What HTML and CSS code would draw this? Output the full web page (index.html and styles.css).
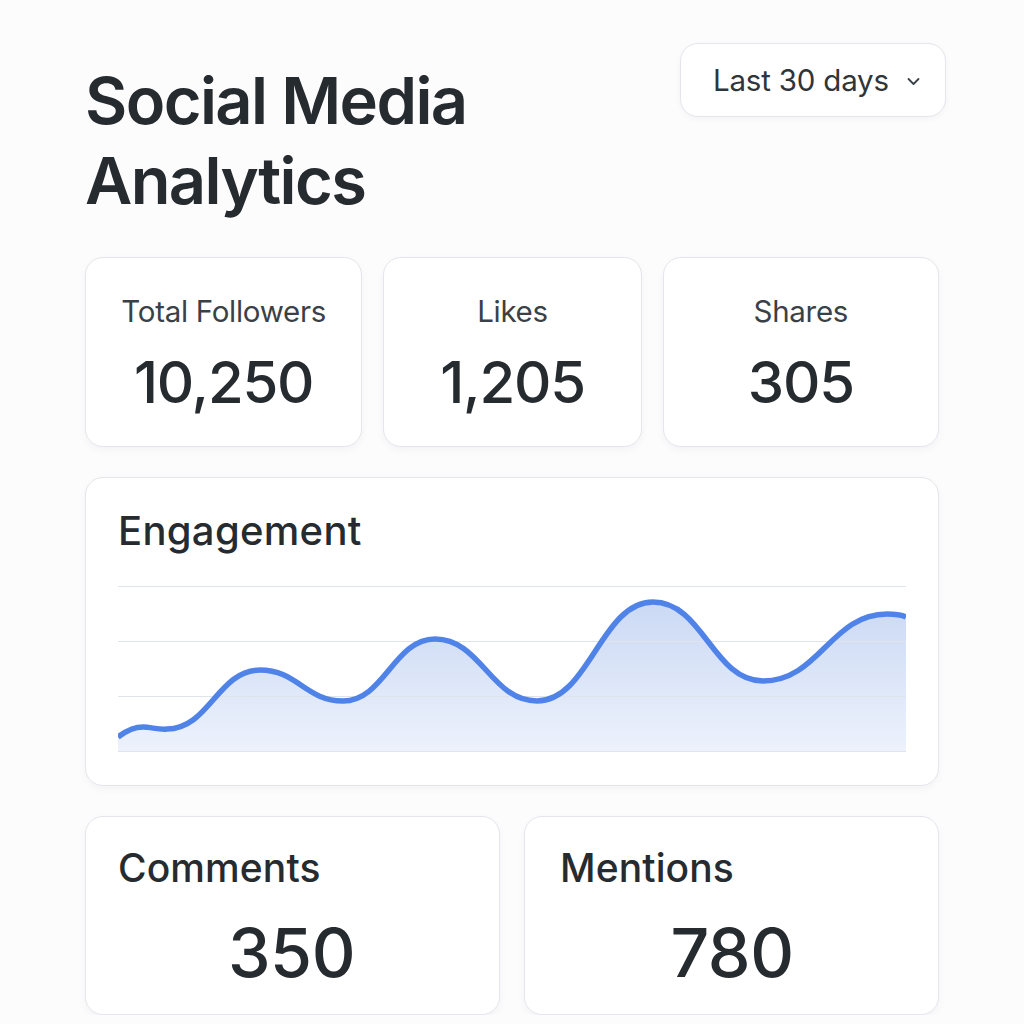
FILE: index.html
```html
<!DOCTYPE html>
<html lang="en">
<head>
<meta charset="utf-8">
<title>Social Media Analytics</title>
<link rel="stylesheet" href="styles.css">
</head>
<body>
<main class="page">
  <header class="header">
    <h1 class="title">Social Media<br>Analytics</h1>
    <button class="range">
      <span class="range-text">Last 30 days</span>
      <svg class="chev" width="13" height="9" viewBox="0 0 13 9" aria-hidden="true"><path d="M1.5 2 L6.5 7 L11.5 2" fill="none" stroke="#3a4146" stroke-width="1.8" stroke-linecap="round" stroke-linejoin="round"/></svg>
    </button>
  </header>

  <section class="stats">
    <div class="card stat">
      <div class="stat-label">Total Followers</div>
      <div class="stat-value">10,250</div>
    </div>
    <div class="card stat">
      <div class="stat-label">Likes</div>
      <div class="stat-value">1,205</div>
    </div>
    <div class="card stat">
      <div class="stat-label">Shares</div>
      <div class="stat-value">305</div>
    </div>
  </section>

  <section class="card engagement">
    <h2 class="card-title">Engagement</h2>
    <svg class="chart" width="788" height="168" viewBox="0 -1 788 168" aria-hidden="true">
      <defs>
        <linearGradient id="fillGrad" x1="0" y1="0" x2="0" y2="1">
          <stop offset="0" stop-color="#cbd9f4"/>
          <stop offset="1" stop-color="#edf2fc"/>
        </linearGradient>
      </defs>
      <path d="M0,151 C8,145 15,141 25,141 C33,141 41,144 49,143 C91,143 100,84 142,84 C179,84 188,115 225,115 C266,115 276,53 317,53 C363,53 373,115 419,115 C471,115 483,16 535,16 C585,16 595,95 645,95 C701,95 713,28 769,28 C780,28 784,29 788,31 L788,166 L0,166 Z" fill="url(#fillGrad)"/>
      <g stroke="#dfe3ea" stroke-width="1">
        <line x1="0" y1="0.5" x2="788" y2="0.5"/>
        <line x1="0" y1="55.5" x2="788" y2="55.5"/>
        <line x1="0" y1="110.5" x2="788" y2="110.5"/>
        <line x1="0" y1="165.5" x2="788" y2="165.5"/>
      </g>
      <path d="M0,151 C8,145 15,141 25,141 C33,141 41,144 49,143 C91,143 100,84 142,84 C179,84 188,115 225,115 C266,115 276,53 317,53 C363,53 373,115 419,115 C471,115 483,16 535,16 C585,16 595,95 645,95 C701,95 713,28 769,28 C780,28 784,29 788,31" fill="none" stroke="#5083e8" stroke-width="5.5" stroke-linecap="butt"/>
    </svg>
  </section>

  <section class="bottom">
    <div class="card metric">
      <div class="metric-label">Comments</div>
      <div class="metric-value">350</div>
    </div>
    <div class="card metric">
      <div class="metric-label">Mentions</div>
      <div class="metric-value">780</div>
    </div>
  </section>
</main>
</body>
</html>
```

FILE: styles.css
```css
* { box-sizing: border-box; }

html, body {
  margin: 0;
  padding: 0;
  background: #fcfcfd;
}

body {
  font-family: Inter, "Noto Sans", "Liberation Sans", sans-serif;
  color: #262b2f;
}

.page {
  width: 854px;
  margin-left: 85px;
  padding-top: 43px;
}

.header {
  display: flex;
  justify-content: space-between;
  align-items: flex-start;
  margin-right: -7px;
}

.title {
  margin: 18px 0 0 0;
  font-size: 65px;
  line-height: 80px;
  font-weight: 600;
  letter-spacing: -1.6px;
  color: #262b2f;
}

.range {
  display: flex;
  align-items: center;
  justify-content: space-between;
  width: 266px;
  height: 74px;
  padding: 0 25px 0 32px;
  background: #fff;
  border: 1px solid #e3e6ea;
  border-radius: 18px;
  box-shadow: 0 2px 6px rgba(20, 30, 50, 0.04);
  font-family: inherit;
  font-size: 29.5px;
  font-weight: 400;
  letter-spacing: -0.2px;
  color: #2f3539;
  white-space: nowrap;
}

.range-text { white-space: nowrap; }

.chev { flex: none; margin-top: 2px; }

.card {
  background: #fff;
  border: 1px solid #e3e6ea;
  border-radius: 18px;
  box-shadow: 0 3px 8px rgba(20, 30, 50, 0.04);
}

.stats {
  display: grid;
  grid-template-columns: 277fr 258fr 276fr;
  gap: 21px;
  margin-top: 36px;
}

.stat {
  height: 190px;
  display: flex;
  flex-direction: column;
  align-items: center;
  padding-top: 35px;
}

.stat-label {
  font-size: 29.5px;
  line-height: 36px;
  letter-spacing: -0.3px;
  color: #3a4146;
}

.stat-value {
  margin-top: 18px;
  font-size: 58px;
  line-height: 70px;
  font-weight: 500;
  letter-spacing: -1.2px;
  color: #262b2f;
}

.engagement {
  margin-top: 30px;
  height: 309px;
  padding: 29px 32px 0 32px;
}

.card-title {
  margin: 0;
  font-size: 40px;
  line-height: 48px;
  font-weight: 500;
  letter-spacing: 0.3px;
  color: #262b2f;
}

.chart {
  display: block;
  margin-top: 30px;
}

.bottom {
  display: grid;
  grid-template-columns: 1fr 1fr;
  gap: 24px;
  margin-top: 30px;
}

.metric {
  height: 199px;
  padding: 27px 34px 0 32px;
  display: flex;
  flex-direction: column;
}

.metric:last-child { padding-left: 35px; }

.metric-label {
  font-size: 39px;
  line-height: 48px;
  font-weight: 500;
  letter-spacing: 0.1px;
  color: #262b2f;
}

.metric-value {
  margin-top: 20px;
  align-self: center;
  font-size: 68px;
  line-height: 80px;
  font-weight: 500;
  letter-spacing: -0.5px;
  color: #262b2f;
}
```
